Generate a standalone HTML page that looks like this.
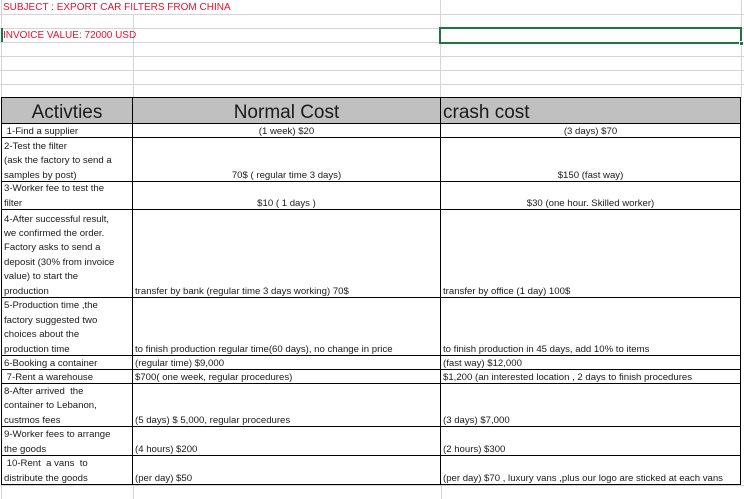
<!DOCTYPE html>
<html><head><meta charset="utf-8"><style>
*{margin:0;padding:0;box-sizing:border-box}
body{width:744px;height:499px;overflow:hidden;background:#fff;position:relative;font-family:"Liberation Sans",sans-serif;font-size:9.6px;color:#1a1a1a}
.g{position:absolute;background:#d4d4d4}
.c{position:absolute;border:1px solid #000;display:flex;flex-direction:column;justify-content:flex-end;padding:0 0 0 2px;line-height:14.4px;white-space:nowrap;overflow:hidden;margin-left:-1px;margin-top:-1px}
.c>div,.c>span{position:relative;top:2px}
.ctr{align-items:center;padding:0}
.h{background:#c0c0c0;font-size:19px;line-height:24px;justify-content:center}
.red{position:absolute;color:#e8112d;font-size:10px;left:3px}
</style></head><body>
<div class="g" style="left:0;top:14px;width:744px;height:1px"></div>
<div class="g" style="left:0;top:28px;width:744px;height:1px"></div>
<div class="g" style="left:0;top:42px;width:744px;height:1px"></div>
<div class="g" style="left:0;top:56px;width:744px;height:1px"></div>
<div class="g" style="left:0;top:70px;width:744px;height:1px"></div>
<div class="g" style="left:0;top:84px;width:744px;height:1px"></div>
<div class="g" style="left:133px;top:14px;width:1px;height:84px"></div>
<div class="g" style="left:440px;top:0;width:1px;height:98px"></div>
<div class="g" style="left:741px;top:0;width:1px;height:98px"></div>
<div class="g" style="left:1px;top:0;width:1px;height:499px"></div>
<div class="g" style="left:0;top:485px;width:744px;height:1px"></div>
<div class="g" style="left:133px;top:485px;width:1px;height:14px"></div>
<div class="g" style="left:441px;top:485px;width:1px;height:14px"></div>
<div class="red" style="top:2px">SUBJECT : EXPORT CAR FILTERS FROM CHINA</div>
<div class="red" style="top:30px">INVOICE VALUE: 72000 USD</div>
<div style="position:absolute;left:1px;top:28px;width:2px;height:14px;background:#217346"></div>
<div style="position:absolute;left:439px;top:27px;width:303px;height:17px;border:2px solid #217346"></div>
<div style="position:absolute;left:739px;top:41px;width:5px;height:5px;background:#217346;border:1px solid #fff"></div>

<div class="c h ctr" style="left:2px;top:98px;width:132px;height:27px"><span>Activties</span></div>
<div class="c h ctr" style="left:133px;top:98px;width:309px;height:27px"><span>Normal Cost</span></div>
<div class="c h" style="left:441px;top:98px;width:301px;height:27px;align-items:flex-start;padding-left:2px"><span>crash cost</span></div>

<div class="c" style="left:2px;top:124px;width:132px;height:15px"><div>&nbsp;1-Find a supplier</div></div>
<div class="c ctr" style="left:133px;top:124px;width:309px;height:15px"><div>(1 week) $20</div></div>
<div class="c ctr" style="left:441px;top:124px;width:301px;height:15px"><div>(3 days) $70</div></div>

<div class="c" style="left:2px;top:138px;width:132px;height:45px"><div>2-Test the filter</div><div>(ask the factory to send a</div><div>samples by post)</div></div>
<div class="c ctr" style="left:133px;top:138px;width:309px;height:45px"><div>70$ ( regular time 3 days)</div></div>
<div class="c ctr" style="left:441px;top:138px;width:301px;height:45px"><div>$150 (fast way)</div></div>

<div class="c" style="left:2px;top:182px;width:132px;height:29px"><div>3-Worker fee to test the</div><div>filter</div></div>
<div class="c ctr" style="left:133px;top:182px;width:309px;height:29px"><div>$10 ( 1 days )</div></div>
<div class="c ctr" style="left:441px;top:182px;width:301px;height:29px"><div>$30 (one hour. Skilled worker)</div></div>

<div class="c" style="left:2px;top:210px;width:132px;height:89px"><div>4-After successful result,</div><div>we confirmed the order.</div><div>Factory asks to send a</div><div>deposit (30% from invoice</div><div>value) to start the</div><div>production</div></div>
<div class="c" style="left:133px;top:210px;width:309px;height:89px"><div>transfer by bank (regular time 3 days working) 70$</div></div>
<div class="c" style="left:441px;top:210px;width:301px;height:89px"><div>transfer by office (1 day) 100$</div></div>

<div class="c" style="left:2px;top:298px;width:132px;height:59px"><div>5-Production time ,the</div><div>factory suggested two</div><div>choices about the</div><div>production time</div></div>
<div class="c" style="left:133px;top:298px;width:309px;height:59px"><div>to finish production regular time(60 days), no change in price</div></div>
<div class="c" style="left:441px;top:298px;width:301px;height:59px"><div>to finish production in 45 days, add 10% to items</div></div>

<div class="c" style="left:2px;top:356px;width:132px;height:15px"><div>6-Booking a container</div></div>
<div class="c" style="left:133px;top:356px;width:309px;height:15px"><div>(regular time) $9,000</div></div>
<div class="c" style="left:441px;top:356px;width:301px;height:15px"><div>(fast way) $12,000</div></div>

<div class="c" style="left:2px;top:370px;width:132px;height:15px"><div>&nbsp;7-Rent a warehouse</div></div>
<div class="c" style="left:133px;top:370px;width:309px;height:15px"><div>$700( one week, regular procedures)</div></div>
<div class="c" style="left:441px;top:370px;width:301px;height:15px"><div>$1,200 (an interested location , 2 days to finish procedures</div></div>

<div class="c" style="left:2px;top:384px;width:132px;height:44px"><div>8-After arrived &nbsp;the</div><div>container to Lebanon,</div><div>custmos fees</div></div>
<div class="c" style="left:133px;top:384px;width:309px;height:44px"><div>(5 days) $ 5,000, regular procedures</div></div>
<div class="c" style="left:441px;top:384px;width:301px;height:44px"><div>(3 days) $7,000</div></div>

<div class="c" style="left:2px;top:427px;width:132px;height:30px"><div>9-Worker fees to arrange</div><div>the goods</div></div>
<div class="c" style="left:133px;top:427px;width:309px;height:30px"><div>(4 hours) $200</div></div>
<div class="c" style="left:441px;top:427px;width:301px;height:30px"><div>(2 hours) $300</div></div>

<div class="c" style="left:2px;top:456px;width:132px;height:30px"><div>&nbsp;10-Rent &nbsp;a vans &nbsp;to</div><div>distribute the goods</div></div>
<div class="c" style="left:133px;top:456px;width:309px;height:30px"><div>(per day) $50</div></div>
<div class="c" style="left:441px;top:456px;width:301px;height:30px"><div>(per day) $70 , luxury vans ,plus our logo are sticked at each vans</div></div>
</body></html>
